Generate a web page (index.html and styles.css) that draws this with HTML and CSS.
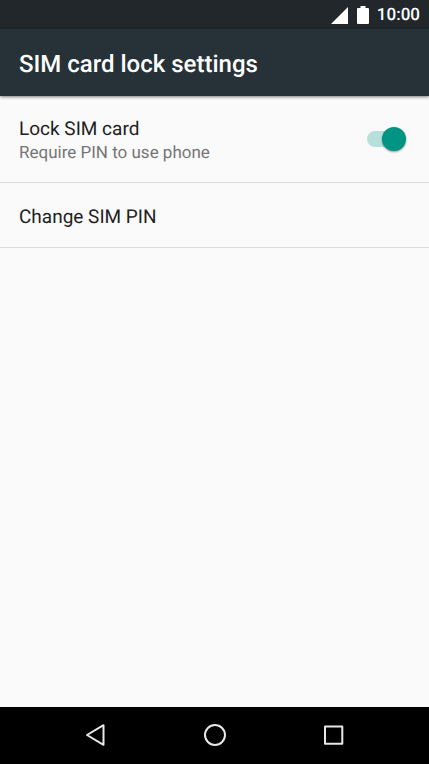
FILE: index.html
```html
<!DOCTYPE html>
<html lang="en">
<head>
<meta charset="utf-8">
<meta name="viewport" content="width=device-width, initial-scale=1">
<title>SIM card lock settings</title>
<link rel="stylesheet" href="styles.css">
</head>
<body>
<div class="status-bar">
  <svg class="signal" viewBox="0 0 17 17" aria-hidden="true"><path d="M17 0v17H0z"/></svg>
  <svg class="battery" viewBox="0 0 12 18" aria-hidden="true"><path d="M3.500 0h5v2h2.500q1 0 1 1v14q0 1-1 1H1q-1 0-1-1V3q0-1 1-1h2.500z"/></svg>
  <time>10:00</time>
</div>
<header class="app-bar"><h1>SIM card lock settings</h1></header>
<main class="settings">
  <label class="row row-switch">
    <span class="labels">
      <span class="title">Lock SIM card</span>
      <span class="summary">Require PIN to use phone</span>
    </span>
    <input class="switch" type="checkbox" role="switch" checked>
  </label>
  <button class="row row-action title" type="button">Change SIM PIN</button>
</main>
<nav class="nav-bar">
  <button type="button" aria-label="Back"><svg viewBox="0 0 24 24"><path d="M20.500 2.200v19.600L4 12z"/></svg></button>
  <button type="button" aria-label="Home"><svg viewBox="0 0 24 24"><circle cx="12" cy="12" r="10"/></svg></button>
  <button type="button" aria-label="Recent apps"><svg viewBox="0 0 24 24"><rect x="3" y="3.500" width="17.300" height="17.300"/></svg></button>
</nav>
</body>
</html>
```
FILE: styles.css
```css
* { box-sizing: border-box; }
body {
  margin: 0;
  min-height: 100vh;
  display: flex;
  flex-direction: column;
  background: #fafafa;
  color: #212121;
  font-family: Roboto, sans-serif;
  text-rendering: geometricPrecision;
}
button {
  margin: 0;
  padding: 0;
  border: 0;
  background: none;
  color: inherit;
  font-family: inherit;
  text-rendering: inherit;
}
.status-bar {
  height: 29px;
  padding: 1px 9px 0;
  display: flex;
  align-items: center;
  justify-content: flex-end;
  background: #21272b;
  color: #fff;
  font-size: 17px;
  font-weight: 500;
}
.status-bar svg { fill: #fff; }
.signal { width: 17px; height: 17px; margin-right: 9px; }
.battery { width: 12px; height: 18px; margin-right: 8px; }
.app-bar {
  height: 67px;
  padding: 2px 19px 0;
  display: flex;
  align-items: center;
  background: #263238;
  color: #fff;
  box-shadow: 0 1px 3px rgba(0, 0, 0, 0.5);
}
h1 { margin: 0; font-size: 24px; font-weight: 500; }
.settings { flex: 1; }
.row {
  width: 100%;
  padding: 0 20px 0 19px;
  display: flex;
  align-items: center;
  border-bottom: 1px solid #dcdcdc;
  text-align: left;
}
.row-switch { height: 87px; justify-content: space-between; }
.row-action { height: 65px; padding-top: 3px; }
.labels { display: flex; flex-direction: column; padding-top: 4px; }
.title { font-size: 19px; line-height: 24px; }
.summary { color: #757575; font-size: 17px; line-height: 24px; }
.switch {
  appearance: none;
  position: relative;
  width: 40px;
  height: 26px;
  margin: 0 2px 0 0;
}
.switch::before {
  content: "";
  position: absolute;
  inset: 5px 4px 5px 0;
  border-radius: 8px;
  background: #b7e0dc;
}
.switch::after {
  content: "";
  position: absolute;
  top: 1px;
  right: 1px;
  width: 24px;
  height: 24px;
  border-radius: 50%;
  background: #009485;
  box-shadow: 0 1px 2px rgba(0, 0, 0, 0.4);
}
.nav-bar {
  height: 57px;
  padding: 0 35px 1px;
  display: flex;
  background: #000;
}
.nav-bar button {
  flex: 1;
  display: flex;
  align-items: center;
  justify-content: center;
}
.nav-bar svg {
  width: 24px;
  height: 24px;
  fill: none;
  stroke: #e8e8e8;
  stroke-width: 2;
  stroke-linejoin: round;
}
```
